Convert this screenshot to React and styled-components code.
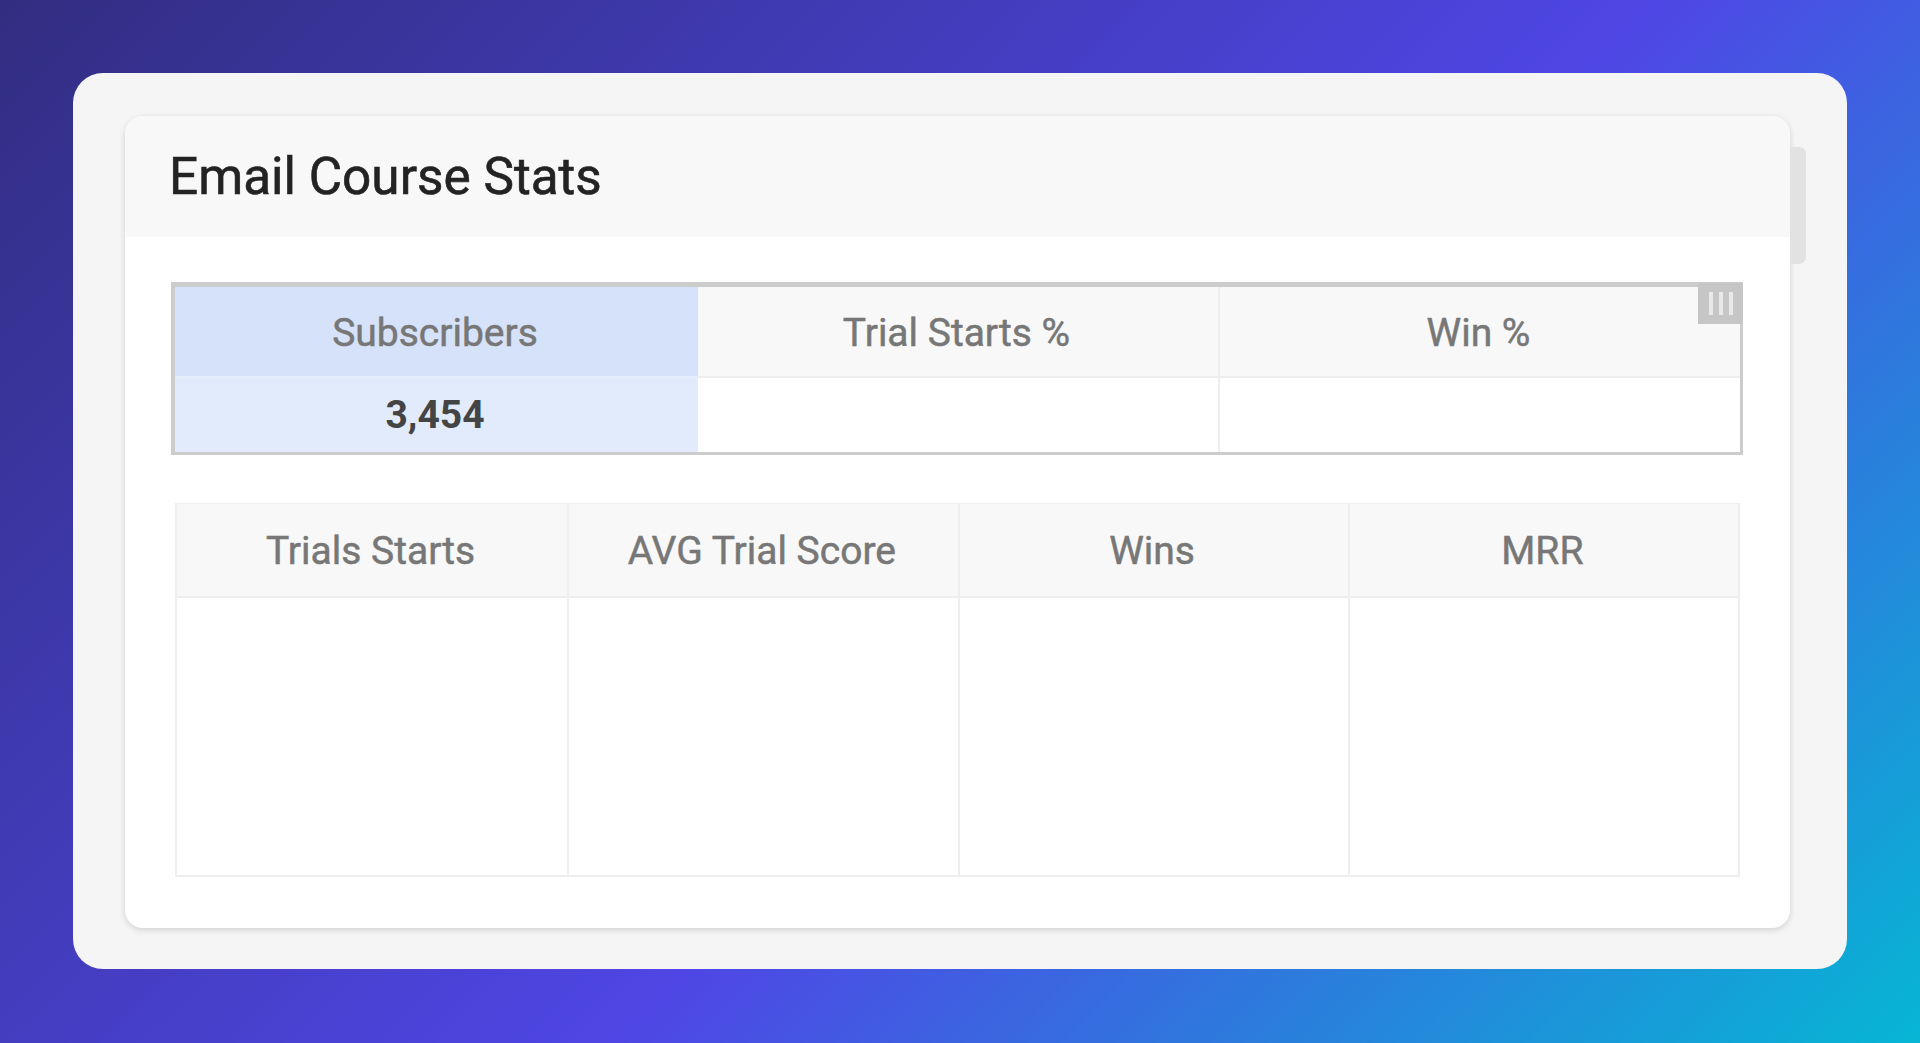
import React from 'react';
import styled, { createGlobalStyle } from 'styled-components';

const GlobalStyle = createGlobalStyle`
  html, body {
    margin: 0;
    padding: 0;
  }
  body {
    font-family: Roboto, "Liberation Sans", sans-serif;
  }
`;

const Page = styled.div`
  box-sizing: border-box;
  height: 1043px;
  padding: 73px 73px 74px;
  background: linear-gradient(135deg, #312e81 0%, #4f46e5 56%, #06b6d4 100%);
  overflow: hidden;
`;

const Frame = styled.div`
  position: relative;
  box-sizing: border-box;
  height: 100%;
  padding: 43px 57px 41px 52px;
  background: #f5f5f5;
  border-radius: 30px;
`;

const Scrollbar = styled.div`
  position: absolute;
  top: 74px;
  right: 41px;
  width: 16px;
  height: 117px;
  background: #e2e2e2;
  border-radius: 0 7px 7px 0;
`;

const Card = styled.div`
  height: 100%;
  display: flex;
  flex-direction: column;
  background: #fff;
  border-radius: 18px;
  box-shadow: 0 2px 6px rgba(0, 0, 0, 0.15);
  overflow: hidden;
`;

const CardHeader = styled.div`
  box-sizing: border-box;
  height: 121px;
  padding: 0 44px;
  display: flex;
  align-items: center;
  background: #f8f8f8;
`;

const Title = styled.h1`
  margin: 0;
  font-size: 51.3px;
  font-weight: 400;
  color: #232323;
  -webkit-text-stroke: 0.6px #232323;
`;

const CardBody = styled.div`
  flex: 1;
  padding: 45px 47px 51px 46px;
  display: flex;
  flex-direction: column;
  gap: 48px;
`;

const SummaryTable = styled.div`
  position: relative;
  display: grid;
  grid-template-columns: 523px 520px 1fr;
  grid-template-rows: 91px 74px;
  border: 3px solid #cccccc;
  border-width: 5px 3px 3px 4px;
`;

const DetailTable = styled.div`
  flex: 1;
  margin: 0 3px 0 4px;
  display: grid;
  grid-template-columns: repeat(4, 1fr);
  grid-template-rows: 94px 1fr;
  border: solid #eeeeee;
  border-width: 1px 2px 2px;
`;

const HeadCell = styled.div`
  display: flex;
  align-items: center;
  justify-content: center;
  padding: 2px 3px 0 0;
  font-size: 39px;
  font-weight: 400;
  color: #777777;
  background: ${(p) => (p.$active ? '#d6e1fa' : '#f8f8f8')};
  border-bottom: 2px solid ${(p) => (p.$active ? '#e6edfb' : '#eeeeee')};
  border-left: ${(p) => (p.$divided ? '2px solid #eeeeee' : 'none')};
  -webkit-text-stroke: 0.5px #777777;
`;

const ValueCell = styled.div`
  display: flex;
  align-items: center;
  justify-content: center;
  padding-right: 3px;
  font-size: 39px;
  font-weight: 700;
  color: #444444;
  background: ${(p) => (p.$active ? '#e1ebfc' : '#ffffff')};
  border-left: ${(p) => (p.$divided ? '2px solid #eeeeee' : 'none')};
`;

const ColumnsButton = styled.div`
  position: absolute;
  top: -4px;
  right: -3px;
  width: 45px;
  height: 41px;
  display: flex;
  align-items: center;
  justify-content: center;
  gap: 6px;
  background: #c6c6c6;
`;

const ColumnsBar = styled.span`
  width: 4px;
  height: 23px;
  background: #e9e9e9;
`;

const statColumns = [
  { label: 'Subscribers', value: '3,454', active: true },
  { label: 'Trial Starts %', value: '' },
  { label: 'Win %', value: '' },
];

const detailColumns = ['Trials Starts', 'AVG Trial Score', 'Wins', 'MRR'];

export default function App() {
  return (
    <>
      <GlobalStyle />
      <Page>
        <Frame>
          <Scrollbar />
          <Card>
            <CardHeader>
              <Title>Email Course Stats</Title>
            </CardHeader>
            <CardBody>
              <SummaryTable>
                {statColumns.map((c, i) => (
                  <HeadCell key={c.label} $active={c.active} $divided={i > 1}>
                    {c.label}
                  </HeadCell>
                ))}
                {statColumns.map((c, i) => (
                  <ValueCell key={c.label} $active={c.active} $divided={i > 1}>
                    {c.value}
                  </ValueCell>
                ))}
                <ColumnsButton>
                  <ColumnsBar />
                  <ColumnsBar />
                  <ColumnsBar />
                </ColumnsButton>
              </SummaryTable>
              <DetailTable>
                {detailColumns.map((label, i) => (
                  <HeadCell key={label} $divided={i > 0}>
                    {label}
                  </HeadCell>
                ))}
                {detailColumns.map((label, i) => (
                  <ValueCell key={label} $divided={i > 0} />
                ))}
              </DetailTable>
            </CardBody>
          </Card>
        </Frame>
      </Page>
    </>
  );
}
